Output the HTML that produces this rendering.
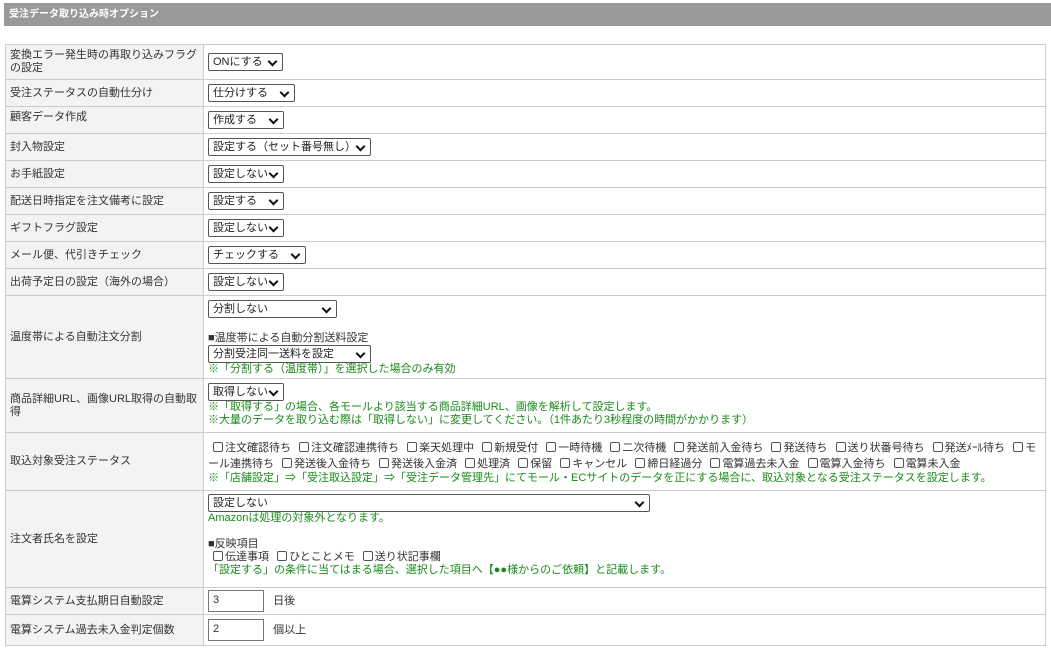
<!DOCTYPE html>
<html><head><meta charset="utf-8"><style>
*{box-sizing:border-box;margin:0;padding:0}
body{width:1051px;height:651px;background:#fff;font-family:"Liberation Sans","Noto Sans CJK JP",sans-serif;font-size:11px;color:#333;overflow:hidden}
.hd{position:absolute;left:4px;top:3px;width:1047px;height:23px;background:#999;color:#fff;font-weight:bold;font-size:10px;line-height:23px;padding-left:5px}
table{position:absolute;left:5px;top:44px;width:1041px;border-collapse:collapse}
td{border:1px solid #ccc;vertical-align:middle;padding:2px 4px;line-height:13px}
td.l{width:198px;background:#f3f3f3;padding-left:4px}
.s{display:inline-block;height:18px;border:1px solid #555;border-radius:2px;background:#fff;font-size:11px;line-height:16px;padding-left:4px;position:relative;vertical-align:middle;color:#222}
.s:after{content:"";position:absolute;right:6px;top:4px;width:5px;height:5px;border-right:2px solid #111;border-bottom:2px solid #111;transform:rotate(45deg)}
.g{color:#1a8a1a}
.cb{display:inline-block;width:10px;height:10px;border:1px solid #555;border-radius:2px;vertical-align:-1px;margin:0 2px 0 5px}
.in{display:inline-block;width:56px;height:22px;border:1px solid #777;vertical-align:middle;padding:3px 4px;font-size:11px}
</style></head><body>
<div class="hd">受注データ取り込み時オプション</div>
<table>
<tr style="height:35px"><td class="l">変換エラー発生時の再取り込みフラグの設定</td><td><span class="s" style="width:75px">ONにする</span></td></tr>
<tr style="height:27px"><td class="l">受注ステータスの自動仕分け</td><td><span class="s" style="width:87px">仕分けする</span></td></tr>
<tr style="height:27px"><td class="l" style="vertical-align:top;padding-top:4px">顧客データ作成</td><td><span class="s" style="width:76px">作成する</span></td></tr>
<tr style="height:27px"><td class="l">封入物設定</td><td><span class="s" style="width:163px">設定する（セット番号無し）</span></td></tr>
<tr style="height:27px"><td class="l">お手紙設定</td><td><span class="s" style="width:76px">設定しない</span></td></tr>
<tr style="height:27px"><td class="l">配送日時指定を注文備考に設定</td><td><span class="s" style="width:76px">設定する</span></td></tr>
<tr style="height:27px"><td class="l">ギフトフラグ設定</td><td><span class="s" style="width:76px">設定しない</span></td></tr>
<tr style="height:27px"><td class="l">メール便、代引きチェック</td><td><span class="s" style="width:98px">チェックする</span></td></tr>
<tr style="height:27px"><td class="l">出荷予定日の設定（海外の場合）</td><td><span class="s" style="width:76px">設定しない</span></td></tr>
<tr style="height:83px"><td class="l">温度帯による自動注文分割</td><td style="vertical-align:top;padding-top:4px"><span class="s" style="width:129px">分割しない</span><div style="height:14px"></div>■温度帯による自動分割送料設定<br><span class="s" style="width:163px">分割受注同一送料を設定</span><div class="g">※「分割する（温度帯）」を選択した場合のみ有効</div></td></tr>
<tr style="height:54px"><td class="l">商品詳細URL、画像URL取得の自動取得</td><td style="vertical-align:top;padding-top:4px"><span class="s" style="width:76px">取得しない</span><div class="g">※「取得する」の場合、各モールより該当する商品詳細URL、画像を解析して設定します。<br>※大量のデータを取り込む際は「取得しない」に変更してください。（1件あたり3秒程度の時間がかかります）</div></td></tr>
<tr style="height:58px"><td class="l">取込対象受注ステータス</td><td style="line-height:16px"><span class="cb"></span>注文確認待ち <span class="cb"></span>注文確認連携待ち <span class="cb"></span>楽天処理中 <span class="cb"></span>新規受付 <span class="cb"></span>一時待機 <span class="cb"></span>二次待機 <span class="cb"></span>発送前入金待ち <span class="cb"></span>発送待ち <span class="cb"></span>送り状番号待ち <span class="cb"></span>発送ﾒｰﾙ待ち <span class="cb"></span>モール連携待ち <span class="cb"></span>発送後入金待ち <span class="cb"></span>発送後入金済 <span class="cb"></span>処理済 <span class="cb"></span>保留 <span class="cb"></span>キャンセル <span class="cb"></span>締日経過分 <span class="cb"></span>電算過去未入金 <span class="cb"></span>電算入金待ち <span class="cb"></span>電算未入金<div class="g" style="line-height:12px">※「店舗設定」⇒「受注取込設定」⇒「受注データ管理先」にてモール・ECサイトのデータを正にする場合に、取込対象となる受注ステータスを設定します。</div></td></tr>
<tr style="height:97px"><td class="l">注文者氏名を設定</td><td style="vertical-align:top;padding-top:3px"><span class="s" style="width:442px">設定しない</span><div class="g">Amazonは処理の対象外となります。</div><div style="height:13px"></div>■反映項目<br><span class="cb"></span>伝達事項 <span class="cb"></span>ひとことメモ <span class="cb"></span>送り状記事欄<div class="g">「設定する」の条件に当てはまる場合、選択した項目へ【●●様からのご依頼】と記載します。</div></td></tr>
<tr style="height:27px"><td class="l">電算システム支払期日自動設定</td><td><span class="in">3</span>&nbsp;&nbsp; 日後</td></tr>
<tr style="height:31px"><td class="l">電算システム過去未入金判定個数</td><td><span class="in">2</span>&nbsp;&nbsp; 個以上</td></tr>
</table>
</body></html>
